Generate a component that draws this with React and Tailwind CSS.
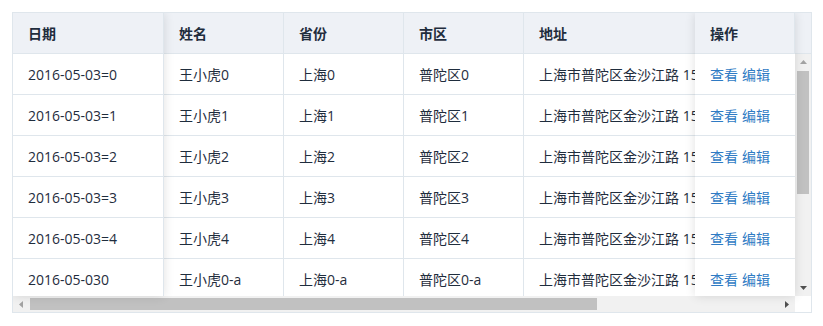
import React from 'react';

// --- Table data ---
const rows = [
  { date: '2016-05-03=0', name: '王小虎0', province: '上海0', city: '普陀区0' },
  { date: '2016-05-03=1', name: '王小虎1', province: '上海1', city: '普陀区1' },
  { date: '2016-05-03=2', name: '王小虎2', province: '上海2', city: '普陀区2' },
  { date: '2016-05-03=3', name: '王小虎3', province: '上海3', city: '普陀区3' },
  { date: '2016-05-03=4', name: '王小虎4', province: '上海4', city: '普陀区4' },
  { date: '2016-05-030', name: '王小虎0-a', province: '上海0-a', city: '普陀区0-a' },
];
const address = '上海市普陀区金沙江路 1518 弄';

const headBase = 'h-[41px] shrink-0 flex items-center bg-[#eef1f6] border-b border-[#dfe6ec] font-bold whitespace-nowrap';
const cellBase = 'h-[41px] shrink-0 flex items-center bg-white border-b border-[#dfe6ec] whitespace-nowrap overflow-hidden';

// --- Scrollbar arrows ---
const Arrow = ({ dir, dark }) => {
  const fill = dark ? '#505050' : '#a3a3a3';
  const pts = {
    up: '0,4 3.5,0 7,4',
    down: '0,0 7,0 3.5,4',
    left: '4,0 4,7 0,3.5',
    right: '0,0 0,7 4,3.5',
  }[dir];
  const vertical = dir === 'up' || dir === 'down';
  return (
    <div className="w-[16px] h-[16px] shrink-0 flex items-center justify-center">
      <svg width={vertical ? 7 : 4} height={vertical ? 4 : 7}>
        <polygon points={pts} fill={fill} />
      </svg>
    </div>
  );
};

export default function App() {
  return (
    <div className="pt-[12px] pl-[12px] bg-white min-h-screen" style={{ fontFamily: '"Open Sans", "Noto Sans CJK SC", sans-serif' }}>
      <div className="w-[800px] h-[301px] border border-[#dfe6ec] flex flex-col text-[14px] text-[#1f2d3d] overflow-hidden">
        <div className="flex h-[283px]">
          {/* fixed left column */}
          <div className="w-[151px] shrink-0 flex flex-col relative z-10 bg-white shadow-[0_0_10px_rgba(0,0,0,0.12)] overflow-hidden">
            <div className={`${headBase} border-r px-[15px]`}>日期</div>
            {rows.map((r) => (
              <div key={r.date} className={`${cellBase} border-r px-[15px]`}>{r.date}</div>
            ))}
          </div>

          {/* scrolling middle */}
          <div className="w-[531px] shrink-0 flex flex-col overflow-hidden">
            <div className="flex">
              <div className={`${headBase} w-[120px] border-r px-[15px]`}>姓名</div>
              <div className={`${headBase} w-[120px] border-r px-[15px]`}>省份</div>
              <div className={`${headBase} w-[120px] border-r px-[15px]`}>市区</div>
              <div className={`${headBase} w-[300px] border-r px-[15px]`}>地址</div>
            </div>
            {rows.map((r) => (
              <div key={r.date} className="flex">
                <div className={`${cellBase} w-[120px] border-r px-[15px]`}>{r.name}</div>
                <div className={`${cellBase} w-[120px] border-r px-[15px]`}>{r.province}</div>
                <div className={`${cellBase} w-[120px] border-r px-[15px]`}>{r.city}</div>
                <div className={`${cellBase} w-[300px] border-r px-[15px]`}>{address}</div>
              </div>
            ))}
          </div>

          {/* fixed right column */}
          <div className="w-[100px] shrink-0 flex flex-col relative z-10 bg-white shadow-[0_0_10px_rgba(0,0,0,0.12)] overflow-hidden">
            <div className={`${headBase} border-r pl-[15px]`}>操作</div>
            {rows.map((r) => (
              <div key={r.date} className={`${cellBase} pl-[15px] gap-[4px] text-[#2f7bc4]`}>
                <span>查看</span>
                <span>编辑</span>
              </div>
            ))}
          </div>

          {/* header gutter + vertical scrollbar */}
          <div className="w-[16px] shrink-0 flex flex-col">
            <div className="h-[41px] bg-[#eef1f6] border-b border-[#dfe6ec]"></div>
            <div className="h-[242px] bg-[#f1f1f1] flex flex-col">
              <Arrow dir="up" />
              <div className="h-[123px] mt-[1px] mx-[2px] bg-[#c1c1c1]"></div>
              <div className="flex-1"></div>
              <Arrow dir="down" dark />
            </div>
          </div>
        </div>

        {/* horizontal scrollbar */}
        <div className="flex h-[16px]">
          <div className="w-[782px] bg-[#f1f1f1] flex items-center">
            <Arrow dir="left" />
            <div className="w-[567px] h-[12px] ml-[1px] bg-[#c1c1c1]"></div>
            <div className="flex-1"></div>
            <Arrow dir="right" dark />
          </div>
          <div className="w-[16px] bg-white"></div>
        </div>
      </div>
    </div>
  );
}
